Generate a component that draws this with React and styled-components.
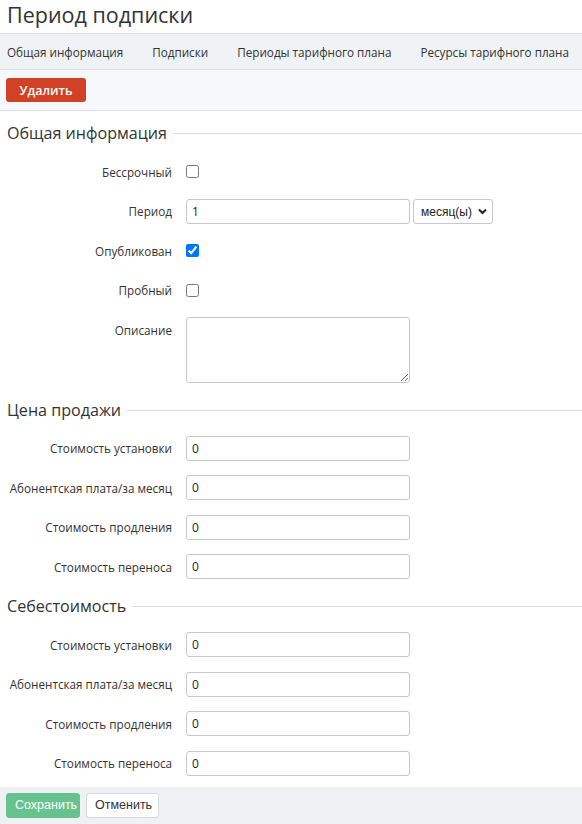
import React from 'react';
import styled, { createGlobalStyle } from 'styled-components';

const GlobalStyle = createGlobalStyle`
  body {
    margin: 0;
    background: #fff;
    font-family: "Open Sans", sans-serif;
    color: #333;
  }
`;

const Page = styled.div`
  width: 582px;
  min-height: 824px;
  display: flex;
  flex-direction: column;
`;

const Title = styled.h1`
  margin: 0;
  padding: 0 7px;
  height: 33px;
  font-size: 21.5px;
  font-weight: 400;
  line-height: 29px;
  color: #333;
`;

const Tabs = styled.nav`
  display: flex;
  gap: 29px;
  height: 35px;
  align-items: center;
  padding-left: 7px;
  background: #f0f3f6;
  border-top: 1px solid #dcdfe3;
  border-bottom: 1px solid #dcdfe3;
  font-size: 11.7px;
  color: #333;
  white-space: nowrap;
`;

const Toolbar = styled.div`
  display: flex;
  align-items: center;
  height: 40px;
  padding: 0 6px;
  background: #f7f8fb;
  border-bottom: 1px solid #dcdfe3;
`;

const DangerButton = styled.button`
  width: 80px;
  height: 24px;
  border: none;
  border-radius: 3px;
  background: #d04126;
  color: #fff;
  font-family: "Open Sans", sans-serif;
  font-size: 12.5px;
  font-weight: 600;
  padding: 0;
`;

const Form = styled.div`
  display: flex;
  flex-direction: column;
  gap: 14.46px;
  padding-top: 9.8px;
`;

const Legend = styled.div`
  display: flex;
  align-items: center;
  gap: 6px;
  height: 24px;
  padding-left: 7px;
  font-size: 16.1px;
  color: #333;
  white-space: nowrap;

  &::after {
    content: '';
    flex: 1;
    height: 1px;
    background: #d8dce0;
    margin-top: 2px;
  }
`;

const Row = styled.div`
  display: grid;
  grid-template-columns: 172px auto;
  column-gap: 14px;
  align-items: ${(p) => (p.$top ? 'start' : 'center')};
  min-height: 25px;
`;

const Label = styled.label`
  text-align: right;
  font-size: 11.7px;
  color: #333;
  white-space: nowrap;
  padding-top: ${(p) => (p.$top ? '5px' : '0')};
`;

const Controls = styled.div`
  display: flex;
  gap: 3px;
  align-items: center;
`;

const Input = styled.input`
  box-sizing: border-box;
  width: 224px;
  height: 25px;
  border: 1px solid #c5c8cc;
  border-radius: 3px;
  padding: 0 5px;
  font-family: "Open Sans", sans-serif;
  font-size: 12px;
  color: #222;
  outline: none;
`;

const Check = styled.input.attrs({ type: 'checkbox' })`
  width: 13px;
  height: 13px;
  margin: 0;
`;

const TextArea = styled.textarea`
  box-sizing: border-box;
  width: 224px;
  height: 66px;
  border: 1px solid #c5c8cc;
  border-radius: 3px;
  font-family: "Open Sans", sans-serif;
  font-size: 12px;
  outline: none;
`;

const SelectBox = styled.div`
  position: relative;
  width: 80px;
  height: 25px;
`;

const Select = styled.select`
  box-sizing: border-box;
  appearance: none;
  width: 100%;
  height: 100%;
  border: 1px solid #c5c8cc;
  border-radius: 3px;
  background: #fff;
  padding: 0 0 0 7px;
  font-family: "Liberation Sans", Arial, sans-serif;
  font-size: 12px;
  color: #222;
  outline: none;
`;

const Chevron = styled.svg`
  position: absolute;
  right: 6px;
  top: 9px;
  width: 9px;
  height: 7px;
  pointer-events: none;
`;

const Footer = styled.div`
  display: flex;
  gap: 6px;
  align-items: center;
  margin-top: 11px;
  height: 37px;
  padding: 0 6px;
  background: #eef2f5;
`;

const Button = styled.button`
  box-sizing: border-box;
  height: 25px;
  padding: 0 8px;
  border-radius: 3px;
  font-family: "Liberation Sans", Arial, sans-serif;
  font-size: 12.5px;
  border: 1px solid ${(p) => (p.$primary ? '#66c38f' : '#d5d8dc')};
  background: ${(p) => (p.$primary ? '#66c38f' : '#fff')};
  color: ${(p) => (p.$primary ? '#fff' : '#333')};
  width: ${(p) => p.$w}px;
`;

const tabs = ['Общая информация', 'Подписки', 'Периоды тарифного плана', 'Ресурсы тарифного плана'];
const priceRows = ['Стоимость установки', 'Абонентская плата/за месяц', 'Стоимость продления', 'Стоимость переноса'];

const PriceSection = ({ title }) => (
  <>
    <Legend>{title}</Legend>
    {priceRows.map((r) => (
      <Row key={r}>
        <Label>{r}</Label>
        <Input defaultValue="0" />
      </Row>
    ))}
  </>
);

export default function App() {
  return (
    <Page>
      <GlobalStyle />
      <Title>Период подписки</Title>
      <Tabs>
        {tabs.map((t) => (
          <span key={t}>{t}</span>
        ))}
      </Tabs>
      <Toolbar>
        <DangerButton>Удалить</DangerButton>
      </Toolbar>
      <Form>
        <Legend>Общая информация</Legend>
        <Row>
          <Label>Бессрочный</Label>
          <Check />
        </Row>
        <Row>
          <Label>Период</Label>
          <Controls>
            <Input defaultValue="1" />
            <SelectBox>
              <Select defaultValue="m">
                <option value="m">месяц(ы)</option>
              </Select>
              <Chevron viewBox="0 0 9 7">
                <path d="M1 1.5 L4.5 5 L8 1.5" fill="none" stroke="#222" strokeWidth="2" />
              </Chevron>
            </SelectBox>
          </Controls>
        </Row>
        <Row>
          <Label>Опубликован</Label>
          <Check defaultChecked />
        </Row>
        <Row>
          <Label>Пробный</Label>
          <Check />
        </Row>
        <Row $top>
          <Label $top>Описание</Label>
          <TextArea />
        </Row>
        <PriceSection title="Цена продажи" />
        <PriceSection title="Себестоимость" />
      </Form>
      <Footer>
        <Button $primary $w={74}>Сохранить</Button>
        <Button $w={73}>Отменить</Button>
      </Footer>
    </Page>
  );
}
